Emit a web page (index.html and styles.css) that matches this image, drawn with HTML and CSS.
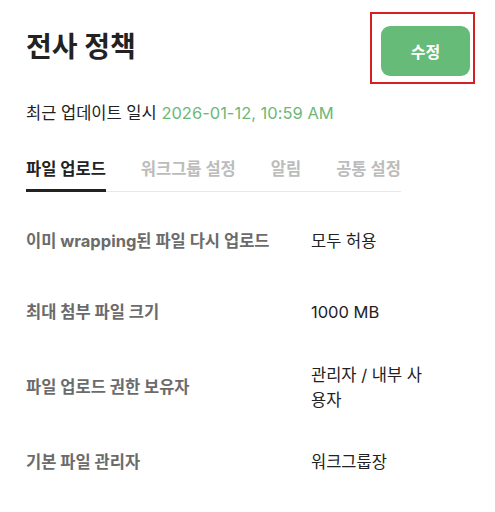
FILE: index.html
```html
<!DOCTYPE html>
<html lang="ko">
<head>
<meta charset="utf-8">
<title>전사 정책</title>
<link rel="stylesheet" href="styles.css">
</head>
<body>
<div class="page">
  <div class="header">
    <h1 class="title">전사 정책</h1>
    <div class="btn-wrap">
      <button class="btn-edit">수정</button>
      <span class="highlight"></span>
    </div>
  </div>
  <p class="updated">최근 업데이트 일시 <span class="date">2026-01-12, 10:59 AM</span></p>
  <div class="tabs">
    <div class="tab active">파일 업로드</div>
    <div class="tab">워크그룹 설정</div>
    <div class="tab">알림</div>
    <div class="tab">공통 설정</div>
  </div>
  <div class="rows">
    <div class="row">
      <div class="label">이미 wrapping된 파일 다시 업로드</div>
      <div class="value">모두 허용</div>
    </div>
    <div class="row">
      <div class="label">최대 첨부 파일 크기</div>
      <div class="value">1000 MB</div>
    </div>
    <div class="row">
      <div class="label">파일 업로드 권한 보유자</div>
      <div class="value">관리자 / 내부 사용자</div>
    </div>
    <div class="row">
      <div class="label">기본 파일 관리자</div>
      <div class="value">워크그룹장</div>
    </div>
  </div>
</div>
</body>
</html>
```

FILE: styles.css
```css
* { box-sizing: border-box; }
html, body {
  margin: 0;
  padding: 0;
  background: #ffffff;
}
body {
  font-family: "Inter", "Noto Sans CJK KR", sans-serif;
  color: #222222;
}
.page {
  width: 495px;
  padding: 26px 25px 0 26px;
}
.header {
  display: flex;
  justify-content: space-between;
  align-items: flex-start;
  height: 50px;
}
.title {
  margin: 7px 0 0 0;
  font-size: 28px;
  font-weight: 700;
  line-height: 1;
  color: #222222;
}
.btn-wrap {
  position: relative;
  display: flex;
}
.btn-edit {
  width: 89px;
  height: 50px;
  border: 0;
  border-radius: 9px;
  background: #66bb78;
  color: #ffffff;
  font-family: "Inter", "Noto Sans CJK KR", sans-serif;
  font-size: 16px;
  font-weight: 700;
  padding: 0;
}
.highlight {
  position: absolute;
  left: -11px;
  top: -14px;
  width: 105px;
  height: 72px;
  border: 2px solid #d42020;
}
.updated {
  margin: 25px 0 0 0;
  font-size: 16.5px;
  line-height: 24px;
  color: #222222;
}
.date {
  color: #6cb878;
}
.tabs {
  display: flex;
  gap: 35px;
  width: 375px;
  margin-top: 32px;
  border-bottom: 1px solid #e8e8e8;
}
.tab {
  font-size: 16.5px;
  font-weight: 700;
  line-height: 24px;
  padding-bottom: 8px;
  color: #bcbcbc;
  margin-bottom: -1px;
  border-bottom: 3px solid transparent;
}
.tab.active {
  color: #222222;
  border-bottom-color: #222222;
}
.rows {
  margin-top: 14px;
}
.row {
  display: flex;
  align-items: center;
  min-height: 71px;
  padding: 14.5px 0;
}
.label {
  width: 285px;
  font-size: 16.5px;
  font-weight: 700;
  color: #6b6b6b;
  line-height: 25px;
}
.value {
  width: 118px;
  font-size: 16.5px;
  color: #222222;
  line-height: 25px;
}
```
